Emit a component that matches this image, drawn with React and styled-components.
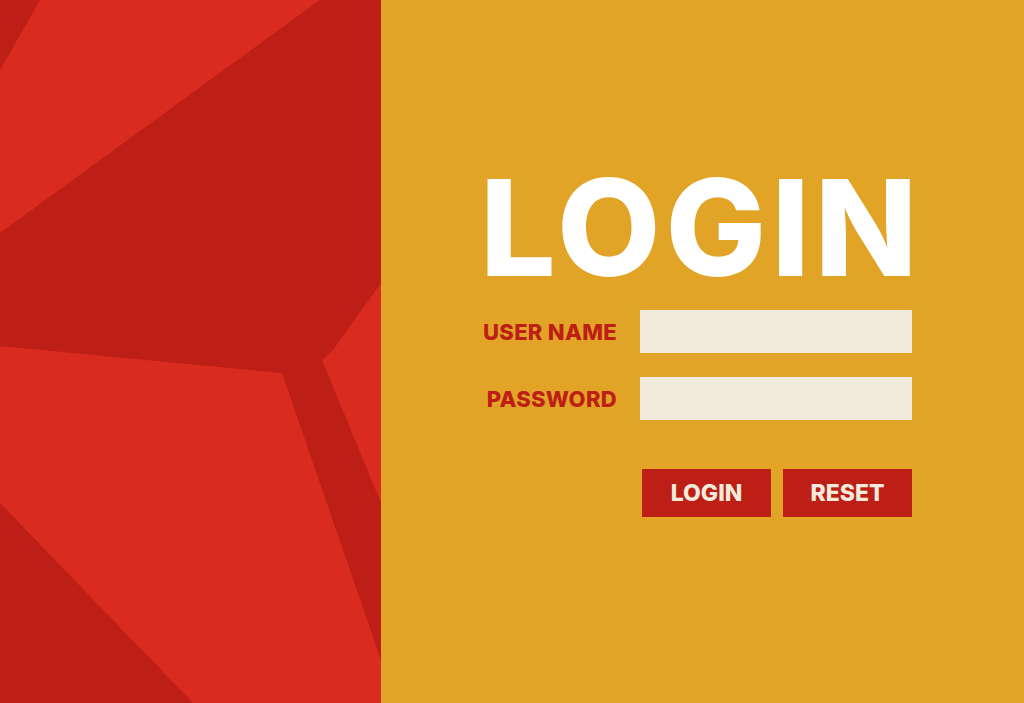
import styled, { createGlobalStyle } from "styled-components";

const GlobalStyle = createGlobalStyle`
  html, body {
    margin: 0;
    padding: 0;
    background: #e2a426;
  }
  * {
    box-sizing: border-box;
  }
`;

const App = () => {
  return (
    <>
      <GlobalStyle />
      <StyledPage>
        <StyledArtPanel>
          <StyledArt viewBox="0 0 381 703" preserveAspectRatio="none">
            <rect x="0" y="0" width="381" height="703" fill="#bd1e16" />
            <polygon points="40,0 320,0 0,233 0,70" fill="#d92b20" />
            <polygon points="381,283 333,350 322,360 381,503" fill="#d92b20" />
            <polygon
              points="0,346 282,373 381,660 381,703 193,703 0,503"
              fill="#d92b20"
            />
          </StyledArt>
        </StyledArtPanel>
        <StyledFormPanel>
          <StyledTitle>LOGIN</StyledTitle>
          <StyledForm>
            <StyledLabel>USER NAME</StyledLabel>
            <StyledInput type="text" />
            <StyledLabel>PASSWORD</StyledLabel>
            <StyledInput type="password" />
            <StyledButtonRow>
              <StyledButton>LOGIN</StyledButton>
              <StyledButton>RESET</StyledButton>
            </StyledButtonRow>
          </StyledForm>
        </StyledFormPanel>
      </StyledPage>
    </>
  );
};

const StyledPage = styled.div`
  display: flex;
  width: 1024px;
  height: 703px;
  overflow: hidden;
  background: #e2a426;
`;

const StyledArtPanel = styled.div`
  width: 381px;
  height: 703px;
  flex-shrink: 0;
`;

const StyledArt = styled.svg`
  display: block;
  width: 100%;
  height: 100%;
`;

const StyledFormPanel = styled.div`
  flex: 1;
  display: flex;
  flex-direction: column;
  padding: 160px 0 0 99px;
`;

const StyledTitle = styled.h1`
  margin: 0;
  font-family: Inter, "Liberation Sans", sans-serif;
  font-size: 134px;
  font-weight: 800;
  line-height: 134px;
  letter-spacing: 5px;
  color: #fff;
  white-space: nowrap;
`;

const StyledForm = styled.div`
  display: grid;
  grid-template-columns: 137px 272px;
  column-gap: 23px;
  row-gap: 24px;
  align-items: center;
  margin-top: 16px;
`;

const StyledLabel = styled.label`
  font-family: Inter, "Liberation Sans", sans-serif;
  font-size: 22px;
  font-weight: 800;
  letter-spacing: 0.3px;
  color: #bd1e16;
  text-align: right;
  white-space: nowrap;
`;

const StyledInput = styled.input`
  width: 272px;
  height: 43px;
  border: none;
  outline: none;
  background: #f2eadc;
  padding: 0 10px;
  font-size: 18px;
`;

const StyledButtonRow = styled.div`
  grid-column: 2;
  display: flex;
  justify-content: flex-end;
  gap: 12px;
  margin-top: 25px;
`;

const StyledButton = styled.button`
  width: 129px;
  height: 48px;
  border: none;
  background: #bd1e16;
  color: #f2eadc;
  font-family: Inter, "Liberation Sans", sans-serif;
  font-size: 23px;
  font-weight: 800;
  cursor: pointer;
  padding: 0;
`;

export default App;
